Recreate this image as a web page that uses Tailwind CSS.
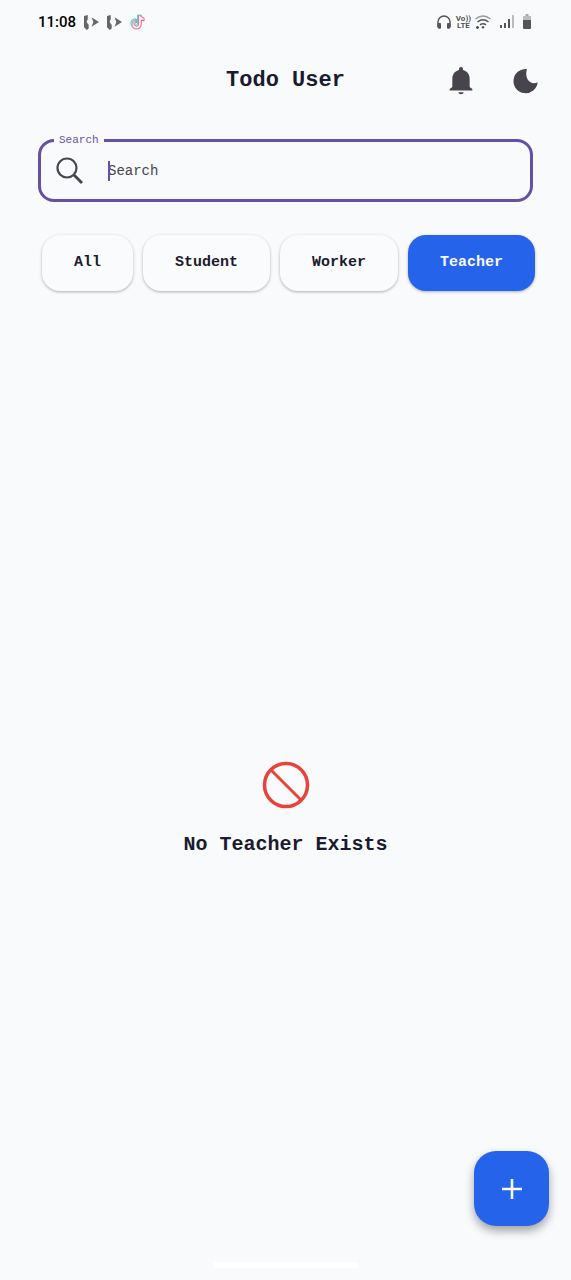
<!DOCTYPE html>
<html lang="en">
<head>
<meta charset="utf-8">
<meta name="viewport" content="width=device-width, initial-scale=1">
<title>Todo User</title>
<script src="https://cdn.jsdelivr.net/npm/@tailwindcss/browser@4"></script>
</head>
<body class="flex min-h-screen flex-col bg-[#f8fafc] font-['Liberation_Mono',monospace] text-[#1a1b2e]">
  <!-- Status bar -->
  <div class="flex h-11 items-center justify-between pr-10 pl-[38px]">
    <div class="flex items-center gap-2">
      <span class="font-[Roboto,sans-serif] text-[15px] font-medium text-black">11:08</span>
      <svg class="h-4 w-[15px]" viewBox="0 0 16 16" fill="#666"><path d="M0 1.500l4-1v5l-1 1v2l2 2.500v4l-2 1.500-3-3zM8 3l8 5-8 5 2-5z"/></svg>
      <svg class="h-4 w-[15px]" viewBox="0 0 16 16" fill="#666"><path d="M0 1.500l4-1v5l-1 1v2l2 2.500v4l-2 1.500-3-3zM8 3l8 5-8 5 2-5z"/></svg>
      <svg class="h-4 w-[15px]" viewBox="0 0 16 16" fill="none" stroke-width="1.100"><path d="M9 1v9.500a2 2 0 1 1-2-2V5.500a5 5 0 1 0 5 5V6l3 .5V4L12 2V1z" stroke="#f06a8c"/><path d="M8 .5v9a2 2 0 1 1-2-2v-3a5 5 0 0 0-4 8M8 .5h3l1 2" stroke="#62cfd0"/></svg>
    </div>
    <div class="flex items-center text-[#555]">
      <svg class="h-4 w-4" viewBox="0 0 16 16" fill="none" stroke="currentColor" stroke-width="1.500"><path d="M2 13V8a6 6 0 0 1 12 0v5"/><path d="M2 9.500h2.500v4.700H3A1 1 0 0 1 2 13zM14 9.500h-2.500v4.700H13a1 1 0 0 0 1-1.200z" fill="currentColor" stroke-width="1"/></svg>
      <span class="ml-1 flex flex-col items-center font-[Roboto,sans-serif] text-[8px] leading-[7px] font-bold"><span>Vo))</span><span>LTE</span></span>
      <svg class="ml-1 h-4 w-4" viewBox="0 0 16 16" fill="none" stroke="currentColor" stroke-width="1.500"><path d="M.5 5q7.500-6 15 0" stroke="#999"/><path d="M2.500 8q5.500-4.500 11 0M5 10.800q3-2.300 6 0"/><circle cx="8" cy="13.300" r="1.200" fill="currentColor" stroke="none"/><path d="M1 13.500h3M2.500 12v3"/></svg>
      <svg class="ml-2 h-4 w-4" viewBox="0 0 16 16" fill="currentColor"><path d="M1 11h2v3H1zM5 9h2v5H5zM9 5h2v9H9z"/><path d="M13 1h2v13h-2z" fill="#bbb"/></svg>
      <svg class="ml-2 h-4 w-2" viewBox="0 0 8 16"><path d="M2.500 0h3v2h-3z" fill="#aaa"/><path d="M0 3q0-1 1-1h6q1 0 1 1v3H0z" fill="#bbb"/><path d="M0 6h8v8q0 1-1 1H1q-1 0-1-1z" fill="#555"/></svg>
    </div>
  </div>

  <header class="grid h-[74px] grid-cols-[1fr_auto_1fr] items-center px-[30px]">
    <h1 class="col-start-2 text-[22px] leading-7 font-bold">Todo User</h1>
    <div class="flex items-center justify-end gap-8">
      <button type="button" aria-label="Notifications" class="text-[#47444e]">
        <svg class="h-8 w-8" viewBox="0 0 24 24" fill="currentColor"><path d="M12 22c1.100 0 2-.7 2-1.500h-4c0 .8.900 1.500 2 1.500zM18.500 16.500v-6.300c0-3.300-2-5.800-5-6.500V3a1.500 1.500 0 0 0-3 0v.7c-3 .7-5 3.200-5 6.500v6.300L3.500 18v1.200h17V18z"/></svg>
      </button>
      <button type="button" aria-label="Dark mode" class="text-[#47444e]">
        <svg class="h-8 w-8" viewBox="0 0 24 24" fill="currentColor"><path d="M13.500 3A9.100 9.100 0 1 0 21.500 13C17 15.500 11 11 13.500 3z"/></svg>
      </button>
    </div>
  </header>

  <!-- Search field with floating label -->
  <div class="relative mx-[38px] mt-[21px] flex h-[63px] items-center rounded-2xl border-3 border-[#6750a4] pl-[15px]">
    <label for="search" class="absolute -top-[9px] left-[13px] bg-[#f8fafc] px-[5px] text-[11px] leading-[14px] text-[#6750a4]">Search</label>
    <svg class="h-7 w-7 text-[#47444e]" viewBox="0 0 28 28" fill="none" stroke="currentColor" stroke-width="2.200"><circle cx="11" cy="11" r="9.500"/><path d="M17.500 17.500l8.500 8.500" stroke-width="2.800"/></svg>
    <div class="relative ml-6 flex flex-1 items-center">
      <input id="search" type="text" placeholder="Search" class="w-full bg-transparent text-[14px] leading-5 caret-[#6750a4] outline-none placeholder:text-[#47444e]">
      <span class="absolute left-0 h-5 w-0.5 bg-[#6750a4]"></span>
    </div>
  </div>

  <nav aria-label="User type" class="mt-[33px] flex justify-center gap-2.5 pl-1.5 text-[15px] leading-5 font-bold">
    <button type="button" class="h-14 rounded-[18px] bg-[#fafbfd] px-8 shadow-[0_1px_3px_rgba(0,0,0,0.3)]">All</button>
    <button type="button" class="h-14 rounded-[18px] bg-[#fafbfd] px-8 shadow-[0_1px_3px_rgba(0,0,0,0.3)]">Student</button>
    <button type="button" class="h-14 rounded-[18px] bg-[#fafbfd] px-8 shadow-[0_1px_3px_rgba(0,0,0,0.3)]">Worker</button>
    <button type="button" aria-pressed="true" class="h-14 rounded-[18px] bg-[#2563eb] px-8 text-[#f8fafc] shadow-[0_1px_3px_rgba(0,0,0,0.3)]">Teacher</button>
  </nav>

  <main class="flex flex-1 flex-col items-center justify-center gap-6 pt-16">
    <svg class="h-12 w-12" viewBox="0 0 48 48" fill="none" stroke="#e8433a"><circle cx="24" cy="24" r="21.500" stroke-width="3.500"/><path d="M9 9l30 30" stroke-width="3"/></svg>
    <p class="text-[20px] leading-6 font-bold">No Teacher Exists</p>
  </main>

  <div class="flex h-[18px] justify-center"><div class="h-1.5 w-[146px] rounded-full bg-white"></div></div>

  <button type="button" aria-label="Add todo" class="fixed right-[22px] bottom-[54px] flex h-[75px] w-[75px] items-center justify-center rounded-[22px] bg-[#2563eb] text-[#f8fafc] shadow-[0_5px_10px_rgba(0,0,0,0.35)]">
    <svg class="h-5 w-5" viewBox="0 0 20 20" stroke="currentColor" stroke-width="2.600"><path d="M10 0v20M0 10h20"/></svg>
  </button>
</body>
</html>
